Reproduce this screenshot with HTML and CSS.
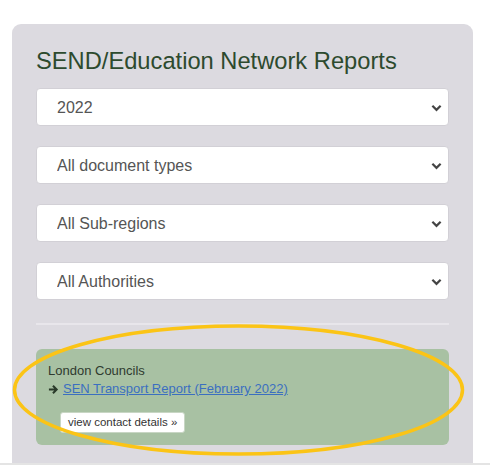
FILE: index.html
```
<!DOCTYPE html>
<html>
<head>
    <title>SEND/Education Network Reports</title>
    <link rel="stylesheet" href="styles.css">
</head>
<body>

    <div class="panel">
        <h2>SEND/Education Network Reports</h2>

        <form class="filters">
            <div class="select-wrap">
                <select name="year">
                    <option>2022</option>
                </select>
                <svg class="chevron" viewBox="0 0 12 8"><path d="M1.5 1.5 L6 6 L10.5 1.5" /></svg>
            </div>
            <div class="select-wrap">
                <select name="type">
                    <option>All document types</option>
                </select>
                <svg class="chevron" viewBox="0 0 12 8"><path d="M1.5 1.5 L6 6 L10.5 1.5" /></svg>
            </div>
            <div class="select-wrap">
                <select name="subregion">
                    <option>All Sub-regions</option>
                </select>
                <svg class="chevron" viewBox="0 0 12 8"><path d="M1.5 1.5 L6 6 L10.5 1.5" /></svg>
            </div>
            <div class="select-wrap">
                <select name="authority">
                    <option>All Authorities</option>
                </select>
                <svg class="chevron" viewBox="0 0 12 8"><path d="M1.5 1.5 L6 6 L10.5 1.5" /></svg>
            </div>
        </form>

        <hr>

        <div class="result">
            <div class="org">London Councils</div>
            <div class="doc">
                <svg class="arrow" viewBox="0 0 12 12"><path d="M6.2 1 L11 6 L6.2 11 L4.6 9.4 L6.8 7.2 H1 V4.8 H6.8 L4.6 2.6 Z" /></svg>
                <a href="#">SEN Transport Report (February 2022)</a>
            </div>
            <button type="button">view contact details &raquo;</button>
        </div>
    </div>

    <svg class="highlight" viewBox="0 0 490 465"><ellipse cx="238.5" cy="390" rx="224" ry="64" /></svg>

</body>
</html>
```

FILE: styles.css
```
body {
    margin: 0;
    padding-top: 24px;
    background-color: #fff;
    font-family: "Liberation Sans", Arial, sans-serif;
    color: #333;
    border-bottom: 2px solid #e4e4e4;
    height: 439px;
    overflow: hidden;
    position: relative;
}

.panel {
    width: 413px;
    margin-left: 12px;
    padding: 24px 24px 30px;
    height: 400px;
    background-color: #dcdae0;
    border-radius: 9px 9px 0 0;
}

h2 {
    margin: 0 0 14px;
    font-size: 23.7px;
    font-weight: normal;
    line-height: 26px;
    color: #2d4a2e;
}

.filters {
    display: flex;
    flex-direction: column;
    gap: 20px;
}

.select-wrap {
    position: relative;
}

select {
    display: block;
    width: 100%;
    height: 38px;
    padding: 0 20px;
    border: 1px solid #d2d0d6;
    border-radius: 4px;
    background-color: #fff;
    font-family: "Liberation Sans", Arial, sans-serif;
    font-size: 16px;
    color: #555;
    appearance: none;
    -webkit-appearance: none;
}

.chevron {
    position: absolute;
    right: 7px;
    top: 16px;
    width: 11px;
    height: 8px;
    fill: none;
    stroke: #444;
    stroke-width: 2.4;
    pointer-events: none;
}

hr {
    margin: 23px 0 24px;
    border: none;
    height: 2px;
    background-color: #e8e6eb;
}

.result {
    padding: 13px 12px 12px;
    background-color: #a8c1a3;
    border-radius: 6px;
    font-size: 13px;
    line-height: 18px;
}

.org {
    color: #2f3a2f;
}

.doc {
    display: flex;
    align-items: center;
    gap: 4px;
}

.arrow {
    width: 11px;
    height: 11px;
    fill: #2a3a2a;
}

.doc a {
    color: #3b6fc0;
}

button {
    margin: 14px 0 0 12px;
    padding: 3px 7px 4px;
    background-color: #fff;
    border: 1px solid #c8d6c4;
    border-radius: 3px;
    font-family: "Liberation Sans", Arial, sans-serif;
    font-size: 11.5px;
    color: #333;
    cursor: pointer;
}

.highlight {
    position: absolute;
    left: 0;
    top: 0;
    width: 490px;
    height: 465px;
    fill: none;
    stroke: #fbc416;
    stroke-width: 3.5;
    pointer-events: none;
}
```
